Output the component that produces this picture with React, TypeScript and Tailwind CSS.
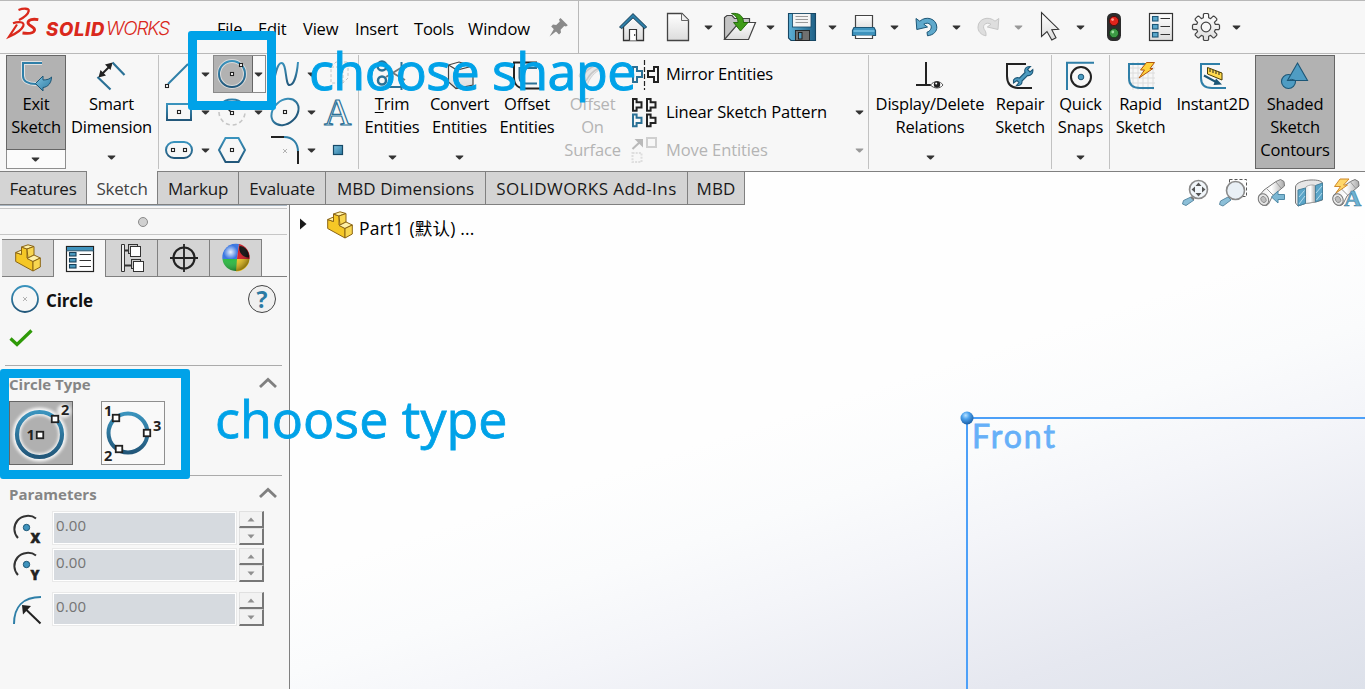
import React from "react";

type Box = [number, number, number, number];

function Ic({ b, children, cls = "" }: { b: Box; children?: React.ReactNode; cls?: string }) {
  return (
    <svg className={"block shrink-0 overflow-visible " + cls} width={b[2]} height={b[3]} viewBox={b.join(" ")} fill="none">
      {children}
    </svg>
  );
}

function Defs() {
  return (
    <svg width="0" height="0" className="absolute">
      <defs>
        <linearGradient id="blue" x1="0" y1="0" x2="0" y2="1">
          <stop offset="0" stopColor="#3a93bd" />
          <stop offset="1" stopColor="#22577a" />
        </linearGradient>
        <linearGradient id="blueFill" x1="0" y1="0" x2="1" y2="1">
          <stop offset="0" stopColor="#7cc0de" />
          <stop offset="1" stopColor="#2d7ba3" />
        </linearGradient>
        <linearGradient id="paper" x1="0" y1="0" x2="0" y2="1">
          <stop offset="0" stopColor="#ffffff" />
          <stop offset="1" stopColor="#dcdcdc" />
        </linearGradient>
        <linearGradient id="grey" x1="0" y1="0" x2="1" y2="0">
          <stop offset="0" stopColor="#e9e9e9" />
          <stop offset="0.5" stopColor="#ffffff" />
          <stop offset="1" stopColor="#a9a9a9" />
        </linearGradient>
        <linearGradient id="disk" x1="0" y1="0" x2="1" y2="0">
          <stop offset="0" stopColor="#5db0d6" />
          <stop offset="1" stopColor="#1f6187" />
        </linearGradient>
        <radialGradient id="ball" cx="0.4" cy="0.3" r="0.7">
          <stop offset="0" stopColor="#b9e2ff" />
          <stop offset="0.4" stopColor="#4da3ee" />
          <stop offset="1" stopColor="#1c5fa5" />
        </radialGradient>
        <radialGradient id="shine" cx="0.3" cy="0.3" r="0.75">
          <stop offset="0" stopColor="#fff" stopOpacity="0.9" />
          <stop offset="0.35" stopColor="#fff" stopOpacity="0.05" />
          <stop offset="1" stopColor="#000" stopOpacity="0.4" />
        </radialGradient>
        <filter id="glow" x="-30%" y="-30%" width="160%" height="160%">
          <feGaussianBlur stdDeviation="1.6" />
        </filter>
      </defs>
    </svg>
  );
}

function Caret({ color = "#333" }: { color?: string }) {
  return (
    <svg className="block shrink-0" width="9" height="5" viewBox="0 0 9 5">
      <path d="M0.7 0.4H8.3V1.2L5 4.6H4L0.7 1.2Z" fill={color} />
    </svg>
  );
}

function Dot({ x, y, s = 3 }: { x: number; y: number; s?: number }) {
  return <rect x={x - s / 2} y={y - s / 2} width={s} height={s} fill="#fff" stroke="#222" strokeWidth={s > 4 ? 1.8 : 1.1} />;
}

/* ---------- title bar ---------- */

function Logo() {
  return (
    <div className="flex items-start w-[217px] h-full">
      <Ic b={[0, 1, 46, 40]}>
        <g stroke="#da291c" strokeLinecap="butt" fill="none">
          <path d="M18.500 10C23 8.300 29.300 8 28.700 11C28 14.500 24 17.500 19 20" strokeWidth="2.3" />
          <path d="M13 23.300C18 21.300 25 21.500 23.300 26C21.300 31 14 34.500 9 36.700L17 24.500" strokeWidth="2.2" />
          <path d="M38.300 19.700C33 18.700 28 19.500 28 22.800C28 26 35.500 27 34.500 30.300C33.500 33.500 28 33.700 22.500 33" strokeWidth="2.900" />
        </g>
      </Ic>
      <div className="mt-[15px] flex text-[#da291c] leading-[26px] italic font-['Inter'] whitespace-nowrap">
        <span className="w-[60px] text-[18.5px] font-extrabold tracking-[0.7px]">SOLID</span>
        <span className="text-[19px] font-light tracking-[-1.2px]">WORKS</span>
      </div>
    </div>
  );
}

function gearPath(cx: number, cy: number) {
  const pts: string[] = [];
  for (let i = 0; i < 8; i++) {
    const a = (i * Math.PI) / 4 - Math.PI / 2;
    const at = (r: number, d: number) => `${(cx + r * Math.cos(a + d)).toFixed(2)} ${(cy + r * Math.sin(a + d)).toFixed(2)}`;
    pts.push(at(9.6, -0.28), at(13, -0.2), at(13.6, -0.12), at(13.6, 0.12), at(13, 0.2), at(9.6, 0.28));
  }
  return "M" + pts.join("L") + "Z";
}

function QuickItem({ children, b, arrow }: { children: React.ReactNode; b: Box; arrow?: string }) {
  return (
    <div className="flex items-center">
      <Ic b={b}>{children}</Ic>
      {arrow && (
        <div className="flex w-[26px] justify-center pr-[2px]">
          <Caret color={arrow} />
        </div>
      )}
    </div>
  );
}

function QuickBar() {
  return (
    <div className="flex items-center h-full border-l border-[#b9b9b9] pl-[36px]">
      <QuickItem b={[615, 9, 36, 36]}>
        <path d="M623.5 26V40.5H643.5V26L633.5 16Z" fill="url(#paper)" stroke="#333" strokeWidth="1.3" />
        <path d="M629.5 40.5V29.5H636.5V40.5" fill="#fff" stroke="#333" strokeWidth="1.2" />
        <path d="M634.7 34v2" stroke="#333" />
        <path d="M619.5 27L633 13.6L646.7 27L644.4 28.6L633 17.8L621.8 28.6Z" fill="#2e7fa8" stroke="#173f58" strokeWidth="1" />
      </QuickItem>
      <div className="w-[9px]" />
      <QuickItem b={[660, 9, 36, 36]} arrow="#333">
        <path d="M667.5 13.5H682L688.5 20V40.5H667.5Z" fill="url(#paper)" stroke="#444" strokeWidth="1.3" />
        <path d="M681.5 13.5V20.5H688.5" fill="#eee" stroke="#666" strokeWidth="1" />
      </QuickItem>
      <QuickItem b={[722, 9, 36, 36]} arrow="#333">
        <path d="M724.5 39.5V17.5L727 15.5H732L734.5 18.5H749.5V24" fill="#c4c4c4" stroke="#444" strokeWidth="1.2" />
        <path d="M724.5 39.5L736 26L740 26L744 22.5H755.5L748.5 39.5Z" fill="url(#paper)" stroke="#444" strokeWidth="1.2" />
        <path d="M731.5 13.5C739 12.5 743.5 16 743.5 22.5H748L740.5 31L733.5 22.5H738C738 18.5 736 15.5 731.5 13.5Z" fill="#3f9c18" stroke="#1f6407" strokeWidth="0.9" />
      </QuickItem>
      <QuickItem b={[784, 9, 36, 36]} arrow="#333">
        <path d="M788.5 13.5H815.5V40.5H791L788.5 38Z" fill="url(#disk)" stroke="#174764" strokeWidth="1.1" />
        <rect x="792.5" y="13.5" width="18.5" height="13.5" fill="#f4f4f4" stroke="#174764" strokeWidth="0.8" />
        <path d="M795.5 16.5H808M795.5 19.5H808M795.5 22.5H808" stroke="#999" />
        <rect x="795.5" y="30.5" width="14" height="10" fill="#707070" stroke="#222" strokeWidth="0.9" />
        <rect x="798.5" y="32.5" width="3.5" height="6.5" fill="#4d9bc2" stroke="#1a1a1a" strokeWidth="0.9" />
      </QuickItem>
      <QuickItem b={[846, 9, 36, 36]} arrow="#333">
        <path d="M855.5 30V15.5H872.5V30Z" fill="url(#paper)" stroke="#444" strokeWidth="1.2" />
        <path d="M854 27.5L852.5 30.5V35.5H875.5V30.5L874 27.5Z" fill="#3f93bd" stroke="#1c5676" strokeWidth="1.2" />
        <path d="M853.5 31H874.5" stroke="#8cd0ee" strokeWidth="1.2" />
        <path d="M855.5 35.5V38.5H872.5V35.5" fill="#fff" stroke="#444" strokeWidth="1.2" />
      </QuickItem>
      <QuickItem b={[908, 9, 36, 36]} arrow="#333">
        <path d="M916 18.5L916.8 29.5L927.5 27L923.8 24.2C929 21.2 933 25.8 930.5 29.5C929.6 31 928.5 31.8 927 32.2L927.5 35.8C934 35 937 31 936.8 27C936.5 18.5 926 15.5 919.8 21.2Z" fill="#5fa9cc" stroke="#1c5676" strokeWidth="1" />
      </QuickItem>
      <QuickItem b={[970, 9, 36, 36]} arrow="#999">
        <path d="M998.8 18.5L998 29.5L987.3 27L991 24.2C985.8 21.2 981.8 25.8 984.3 29.5C985.2 31 986.3 31.8 986 35.8C980.8 35 977.8 31 978 27C978.3 18.5 988.8 15.5 995 21.2Z" fill="#dedede" stroke="#c6c6c6" strokeWidth="1" />
      </QuickItem>
      <QuickItem b={[1032, 9, 36, 36]} arrow="#333">
        <path d="M1041.5 12.5V36.5L1047 31.5L1051.8 40L1056 37.8L1051.8 29.7L1058.6 29.2Z" fill="url(#paper)" stroke="#333" strokeWidth="1.1" />
      </QuickItem>
      <div className="w-[2px]" />
      <QuickItem b={[1096, 9, 36, 36]}>
        <rect x="1107" y="13" width="14" height="28" rx="5.5" fill="#2c2c2c" />
        <circle cx="1114" cy="21" r="4.6" fill="#e0241b" stroke="#5b0d0a" />
        <circle cx="1112.6" cy="19.6" r="1.4" fill="#ff9a8f" />
        <circle cx="1114" cy="33.2" r="4.6" fill="#3d9a45" stroke="#123c16" />
        <circle cx="1112.8" cy="32" r="1.4" fill="#9fe0a0" />
      </QuickItem>
      <div className="w-[11px]" />
      <QuickItem b={[1143, 9, 36, 36]}>
        <rect x="1149.5" y="13.5" width="23" height="27" fill="url(#paper)" stroke="#333" strokeWidth="1.2" />
        {[16.5, 24.5, 32.5].map((y) => (
          <g key={y}>
            <rect x="1152.5" y={y} width="5.5" height="4.5" fill="#5aa7cb" stroke="#1c5676" strokeWidth="1.1" />
            <path d={`M1160.5 ${y + 2}H1170`} stroke="#333" />
          </g>
        ))}
      </QuickItem>
      <div className="w-[9px]" />
      <QuickItem b={[1188, 9, 36, 36]} arrow="#333">
        <path d={gearPath(1206, 27)} fill="url(#paper)" stroke="#444" strokeWidth="1.2" strokeLinejoin="round" />
        <circle cx="1206" cy="27" r="4.8" fill="#f7f7f7" stroke="#444" strokeWidth="1.2" />
      </QuickItem>
    </div>
  );
}

function TitleBar() {
  return (
    <header className="flex h-[54px] border-t border-b border-[#b9b9b9] items-stretch shrink-0">
      <Logo />
      <nav className="flex items-center pt-[4px] whitespace-nowrap text-[16.5px] tracking-[-0.2px] text-black">
        <span className="w-[41px]">File</span>
        <span className="w-[45px]">Edit</span>
        <span className="w-[52px]">View</span>
        <span className="w-[59px]">Insert</span>
        <span className="w-[54px]">Tools</span>
        <span className="w-[76px] tracking-[-0.05px]">Window</span>
      </nav>
      <Ic b={[544, 1, 34, 52]}>
        <g fill="#8a8a8a">
          <path d="M560.5 18L567.8 25.2L566 26.6L564.2 26L560.6 29.8L561 32.6L559 34.4L551.2 26.4L553 24.6L556.2 25L559.8 21.4L559 19.4Z" />
          <path d="M554.2 28.6L556.6 31L549.5 36.6Z" />
        </g>
      </Ic>
      <QuickBar />
    </header>
  );
}

/* ---------- ribbon ---------- */

function Tool({ w, icon, lines, arrow, dim }: { w: string; icon: React.ReactNode; lines: React.ReactNode[]; arrow?: boolean; dim?: boolean }) {
  return (
    <div className={"flex h-[114px] flex-col items-center shrink-0 " + w}>
      <div className="h-[37px] pt-[5px]">{icon}</div>
      <div className={"flex flex-col items-center whitespace-nowrap leading-[23px] " + (dim ? "text-[#b4b4b4]" : "text-black")}>
        {lines.map((l, i) => (
          <span key={i}>{l}</span>
        ))}
      </div>
      {arrow && (
        <div className="mt-auto mb-[9px]">
          <Caret />
        </div>
      )}
    </div>
  );
}

const Sep = () => <div className="w-px h-[114px] bg-[#c2c2c2] shrink-0" />;

function CaretCell({ w, color }: { w: string; color?: string }) {
  return (
    <div className={"flex h-[38px] items-center justify-center shrink-0 " + w}>
      <Caret color={color} />
    </div>
  );
}

function SketchTools() {
  return (
    <div className="w-[199px] shrink-0 pl-[1px]">
      <div className="flex h-[38px]">
        <Ic b={[160, 55, 38, 38]}>
          <path d="M168 84L188 64" stroke="#2f7fa8" strokeWidth="2" />
          <Dot x={167} y={86} />
        </Ic>
        <CaretCell w="w-[15px]" />
        <div className="flex h-[38px] w-[53px] border border-[#8a8a8a] bg-[#f9f9f9]">
          <div className="w-[39px] bg-[#b2b2b2] border-r border-[#666]">
            <Ic b={[214, 56, 36, 36]}>
              <circle cx="232" cy="74" r="13" stroke="#dcdcdc" strokeWidth="4" />
              <circle cx="232" cy="74" r="13" stroke="url(#blue)" strokeWidth="2" />
              <Dot x={232} y={74} />
              <Dot x={241} y={65} />
            </Ic>
          </div>
          <div className="flex flex-1 items-center justify-center pr-px">
            <Caret />
          </div>
        </div>
        <Ic b={[266, 55, 38, 38]}>
          <path d="M273 86C275 75 277 63 281.5 63C287 63 285 85 289.5 85C294 85 297 74 298 62" stroke="url(#blue)" strokeWidth="2" />
        </Ic>
        <CaretCell w="w-[14px]" />
        <Ic b={[318, 55, 38, 38]}>
          <path d="M331 67L336 62H348V78L343 83H331ZM331 67H343V83M343 67L348 62" stroke="#c4c4c4" strokeDasharray="3 2" />
        </Ic>
      </div>
      <div className="flex h-[38px]">
        <Ic b={[160, 93, 38, 38]}>
          <rect x="167" y="104" width="24" height="16" stroke="url(#blue)" strokeWidth="2" />
          <Dot x={179} y={112} />
        </Ic>
        <CaretCell w="w-[15px]" />
        <Ic b={[213, 93, 38, 38]}>
          <path d="M222 104C225 98 239 98 242 104" stroke="#2f7fa8" strokeWidth="2" />
          <path d="M219 112A13 13 0 0 0 245 112" stroke="#c6c6c6" strokeWidth="1.6" strokeDasharray="4 3" />
          <path d="M227 108L232 113" stroke="#222" strokeWidth="1.4" />
          <Dot x={232} y={113} />
        </Ic>
        <CaretCell w="w-[15px]" />
        <Ic b={[266, 93, 38, 38]}>
          <ellipse cx="285" cy="112" rx="15" ry="11.5" transform="rotate(-42 285 112)" stroke="url(#blue)" strokeWidth="2" />
          <Dot x={285} y={112} />
        </Ic>
        <CaretCell w="w-[14px]" />
        <div className="flex w-[39px] items-center justify-center font-['Liberation_Serif'] text-[38px] leading-[38px] text-[#f7f7f7] [-webkit-text-stroke:1.2px_#2a7096]">A</div>
      </div>
      <div className="flex h-[38px]">
        <Ic b={[160, 131, 38, 38]}>
          <rect x="166" y="142" width="26" height="16" rx="8" stroke="url(#blue)" strokeWidth="2" />
          <Dot x={173} y={150} />
          <Dot x={185} y={150} />
        </Ic>
        <CaretCell w="w-[15px]" />
        <Ic b={[213, 131, 53, 38]}>
          <path d="M219 150L225.5 138H238.5L245 150L238.5 162H225.5Z" stroke="url(#blue)" strokeWidth="2" />
          <Dot x={232} y={150} />
        </Ic>
        <Ic b={[266, 131, 38, 38]}>
          <path d="M284 137C293 137 298 143 298 152" stroke="#2f7fa8" strokeWidth="2" />
          <path d="M271 137H284M298 151V164" stroke="#222" strokeWidth="2" />
          <path d="M283 149L287 153M287 149L283 153" stroke="#aaa" strokeWidth="0.9" />
        </Ic>
        <CaretCell w="w-[14px]" />
        <Ic b={[318, 131, 38, 38]}>
          <rect x="333.5" y="145.500" width="9" height="9" fill="url(#blueFill)" stroke="#164a68" strokeWidth="1.2" />
        </Ic>
      </div>
    </div>
  );
}

function PatternGlyph({ x, y, c }: { x: number; y: number; c: string }) {
  return <path transform={`translate(${x} ${y})`} d="M0 0H3.6V3.3H8.5V8.5H3.6V11.8H0Z" stroke={c} strokeWidth="2" />;
}

function EntityList() {
  const row = "flex h-[38px] items-center whitespace-nowrap";
  return (
    <div className="w-[241px] shrink-0 text-black">
      <div className={row}>
        <Ic b={[627, 55, 39, 38]}>
          <path d="M633 67H637V71H642V77H637V82H633Z" stroke="#2b7196" strokeWidth="2" />
          <path d="M658 67H654V71H648V77H654V82H658Z" stroke="#222" strokeWidth="2" />
          <path d="M644.5 60V90" stroke="#222" strokeWidth="1.2" strokeDasharray="5 2" />
        </Ic>
        <span>Mirror Entities</span>
      </div>
      <div className={row}>
        <Ic b={[627, 93, 39, 38]}>
          <PatternGlyph x={633} y={99} c="#222" />
          <PatternGlyph x={647} y={99} c="#222" />
          <PatternGlyph x={633} y={114.500} c="#2b7196" />
          <PatternGlyph x={647} y={114.500} c="#222" />
        </Ic>
        <span className="flex-1 tracking-[-0.17px]">Linear Sketch Pattern</span>
        <CaretCell w="w-[18px]" />
      </div>
      <div className={row + " text-[#b4b4b4]"}>
        <Ic b={[627, 131, 39, 38]}>
          <path d="M632.5 149L641 141" stroke="#b9b9b9" strokeWidth="2" />
          <path d="M634.5 139H643V147.5Z" fill="#b9b9b9" />
          <rect x="647" y="138" width="9" height="9" stroke="#cfcfcf" strokeWidth="2" />
          <rect x="632.5" y="153" width="9" height="9" stroke="#dedede" strokeWidth="2" strokeDasharray="2 1.2" />
        </Ic>
        <span className="flex-1 tracking-[-0.1px]">Move Entities</span>
        <CaretCell w="w-[18px]" color="#999" />
      </div>
    </div>
  );
}

function Ribbon() {
  return (
    <section className="flex h-[117px] shrink-0 pt-px pl-[6px] text-[16.5px] tracking-[-0.2px]">
      <div className="flex w-[60px] shrink-0 flex-col h-[114px]">
        <div className="h-[95px] border border-[#666] bg-[#b2b2b2]">
          <div className="flex flex-col items-center leading-[23px]">
            <Ic b={[16, 56, 40, 36]}>
              <path d="M42 63H23V76C23 81 28 84 36 84" stroke="#e2e2e2" strokeWidth="4" />
              <path d="M42 63H23V76C23 81 28 84 36 84" stroke="#2f7fa8" strokeWidth="2" />
              <path d="M35.5 83.5L43 76V80C47 80 50 79 51.5 77C51.5 83 48 87 43 87.5V91Z" fill="url(#blueFill)" stroke="#1c5676" strokeWidth="1" />
            </Ic>
            <span>Exit</span>
            <span>Sketch</span>
          </div>
        </div>
        <div className="flex h-[19px] items-center justify-center border border-t-0 border-[#8f8f8f] bg-[#fbfbfb] pr-px">
          <Caret />
        </div>
      </div>
      <Tool
        w="w-[91px]"
        arrow
        lines={["Smart", "Dimension"]}
        icon={
          <Ic b={[95, 60, 34, 32]}>
            <path d="M112.5 62.5L124.5 75M97.5 77L110.5 89.5" stroke="#2b7196" strokeWidth="2.2" />
            <path d="M101 75L111 65" stroke="#222" strokeWidth="2" />
            <path d="M98.5 77.5L106 75.5L100.5 70ZM112.5 62.5L105 64.5L110.5 70Z" fill="#222" />
          </Ic>
        }
      />
      <div className="w-px" />
      <Sep />
      <SketchTools />
      <Sep />
      <Tool
        w="w-[68px] -ml-px"
        arrow
        lines={[<span key="t"><span className="underline underline-offset-2">T</span>rim</span>, "Entities"]}
        icon={
          <Ic b={[374, 60, 36, 32]}>
            <circle cx="382" cy="66" r="4.5" stroke="#2b7196" strokeWidth="2.5" />
            <circle cx="382" cy="80.5" r="4" stroke="#2b7196" strokeWidth="2.5" />
            <path d="M386 69L405 80M386 77L404 66" stroke="#777" strokeWidth="2" />
            <path d="M401.5 62V90M386 87H406" stroke="#2b7196" strokeWidth="2" />
          </Ic>
        }
      />
      <Tool
        w="w-[67px]"
        arrow
        lines={["Convert", "Entities"]}
        icon={
          <Ic b={[443, 60, 34, 32]}>
            <path d="M448.500 65L459 62L473 66V85L456 88.500L448.500 82Z" fill="url(#paper)" stroke="#444" strokeWidth="1.2" />
            <path d="M448.500 65L457 70L473 66M457 70V88" stroke="#444" strokeWidth="1.2" />
          </Ic>
        }
      />
      <Tool
        w="w-[68px]"
        lines={["Offset", "Entities"]}
        icon={
          <Ic b={[510, 60, 34, 32]}>
            <path d="M537 62.500H514V78C514 85 519 88.500 526 88.500H541" stroke="#222" strokeWidth="2" />
            <path d="M537 68H519.500V78C519.500 81 522 83.500 526 83.500H537" stroke="#2b7196" strokeWidth="2" />
          </Ic>
        }
      />
      <Tool
        w="w-[63px]"
        dim
        lines={["Offset", "On", "Surface"]}
        icon={
          <Ic b={[577, 60, 34, 32]}>
            <path d="M580 76C583 68 588 63 596 63L602 69C596 72 590 78 588 86Z" fill="#e6e6e6" stroke="#d0d0d0" />
            <path d="M583 78C586 71 592 67 598 65M587 81C590 75 594 71 600 68" stroke="#c6c6c6" strokeWidth="1.4" />
          </Ic>
        }
      />
      <div className="w-[3px]" />
      <EntityList />
      <Sep />
      <Tool
        w="w-[122px]"
        arrow
        lines={["Display/Delete", "Relations"]}
        icon={
          <Ic b={[911, 60, 38, 32]}>
            <path d="M926 62V85M916 85H933" stroke="#222" strokeWidth="2" />
            <path d="M930.500 85C934 80.500 940 80.500 943 85C940 89 934 89 930.500 85Z" fill="#fff" stroke="#555" strokeWidth="1" />
            <circle cx="937" cy="84.500" r="3.200" fill="#222" />
            <circle cx="936.200" cy="83.500" r="1" fill="#fff" />
          </Ic>
        }
      />
      <Tool
        w="w-[60px] -ml-px mr-px"
        lines={["Repair", "Sketch"]}
        icon={
          <Ic b={[1004, 60, 34, 32]}>
            <path d="M1027 64H1008V76C1008 84 1012 88 1020 88H1033" stroke="#222" strokeWidth="2" />
            <path d="M1014.500 80C1016 77.500 1019 77.500 1020.500 78L1026 72.500C1025 69 1027 66 1031.500 66.500L1028.500 69.500L1031 72L1033.800 69.500C1034.500 73.500 1031.500 76 1028.500 75.500L1023 81C1023.500 84 1021 86 1017.500 85.500L1020 82.500L1018 80.500L1014.500 83Z" fill="#4c9bc0" stroke="#1c5676" strokeWidth="1.1" />
          </Ic>
        }
      />
      <Sep />
      <Tool
        w="w-[57px]"
        arrow
        lines={["Quick", "Snaps"]}
        icon={
          <Ic b={[1064, 60, 34, 32]}>
            <path d="M1067 90V62.800H1094" stroke="#2f7fa8" strokeWidth="2" />
            <circle cx="1081" cy="77" r="10" stroke="#222" strokeWidth="2" />
            <circle cx="1081" cy="77" r="2.800" fill="#4c9bc0" stroke="#1c5676" />
          </Ic>
        }
      />
      <Sep />
      <Tool
        w="w-[63px] -ml-px"
        lines={["Rapid", "Sketch"]}
        icon={
          <Ic b={[1124, 60, 34, 32]}>
            <path d="M1133 62V90M1138 62V90M1143 62V90M1148 62V90M1153 62V90M1128 68H1155M1128 73H1155M1128 78H1155M1128 83H1155" stroke="#dcdcdc" />
            <path d="M1146 64H1129V78C1129 84.500 1132 88 1140 88H1154" stroke="#2f7fa8" strokeWidth="2" />
            <path d="M1146.500 62.500H1154.500L1150 68.500H1153L1139 78L1144.500 70H1140.500Z" fill="#ffd23c" stroke="#b3560c" strokeWidth="1" />
          </Ic>
        }
      />
      <Tool
        w="w-[82px]"
        lines={["Instant2D"]}
        icon={
          <Ic b={[1196, 60, 34, 32]}>
            <path d="M1220 64H1201V78C1201 84.500 1204 88 1212 88H1226" stroke="#2f7fa8" strokeWidth="2" />
            <path d="M1207.500 67.500L1222 73V80L1207.500 74Z" fill="#ffd94d" stroke="#4a3b00" strokeWidth="1" />
            <path d="M1210 69V72M1213 70V73M1216 71V74M1219 72V75" stroke="#222" />
            <path d="M1204 75.500L1216 82" stroke="#1c5676" strokeWidth="2" />
            <path d="M1216 78.500L1222 84.500L1213.500 85Z" fill="#1c5676" />
          </Ic>
        }
      />
      <div className="w-px" />
      <div className="h-[114px] w-[80px] shrink-0 border border-[#666] bg-[#b2b2b2] flex flex-col items-center leading-[23px] whitespace-nowrap">
        <Ic b={[1277, 56, 36, 36]}>
          <circle cx="1288.500" cy="81.500" r="7" fill="#4f9cc3" stroke="#1c5676" strokeWidth="1.1" />
          <path d="M1297.500 63L1307.500 80.500H1287.500Z" fill="#4f9cc3" stroke="#1c5676" strokeWidth="1.1" />
          <path d="M1288 80.500A7 7 0 0 1 1295.500 80.500" stroke="#1c5676" />
        </Ic>
        <span>Shaded</span>
        <span>Sketch</span>
        <span>Contours</span>
      </div>
    </section>
  );
}

/* ---------- command tabs and view toolbar ---------- */

function Tab({ w, active, children }: { w: string; active?: boolean; children: React.ReactNode }) {
  return (
    <div
      className={
        "flex h-[34px] shrink-0 items-center justify-center border-r border-b border-[#808080] whitespace-nowrap " +
        (active ? "bg-[#f7f7f7] text-[#444] pt-[2px] " : "bg-[#d4d4d4] text-[#1a1a1a] border-t pt-px ") +
        w
      }
    >
      {children}
    </div>
  );
}

function Binocular({ x }: { x: number }) {
  return (
    <g transform={`translate(${x} 0)`}>
      <path d="M1 196L6 190L18 181.500L22.500 179.500L26 181.500L26.500 186L14.500 196L10.500 204C7 208 -1 204 1 196Z" fill="url(#grey)" stroke="#777" strokeWidth="1" />
      <ellipse cx="5.500" cy="199.500" rx="5" ry="6" transform="rotate(-30 5.500 199.500)" fill="#e6e6e6" stroke="#777" />
      <ellipse cx="5.500" cy="199.500" rx="2.500" ry="3.200" transform="rotate(-30 5.500 199.500)" fill="#bdbdbd" stroke="#888" strokeWidth="0.8" />
      <path d="M9 189L15 195M18 182L23 188" stroke="#999" />
    </g>
  );
}

function ViewBar() {
  return (
    <div className="ml-auto flex pt-[4px]">
      <Ic b={[1178, 176, 36, 34]}>
        <path d="M1191 197L1194 200L1186 205.500L1182.500 204L1183.500 200.500Z" fill="#8cbfd8" stroke="#5b8aa3" />
        <path d="M1191 197L1194 199.500" stroke="#777" strokeWidth="2" />
        <circle cx="1198.500" cy="189.500" r="9" fill="#f1f6fa" stroke="#8a8a8a" strokeWidth="1.6" />
        <path d="M1198.500 182.500L1201.500 186H1195.500ZM1198.500 196.500L1201.500 193H1195.500ZM1191.500 189.500L1195 186.500V192.500ZM1205.500 189.500L1202 186.500V192.500Z" fill="#555" />
      </Ic>
      <Ic b={[1214, 176, 38, 34]}>
        <rect x="1229.500" y="179.500" width="17" height="17" stroke="#555" strokeDasharray="3 2" />
        <path d="M1228 197L1231 200L1223 206L1219.500 204.500L1220.500 201Z" fill="#8cbfd8" stroke="#5b8aa3" />
        <circle cx="1235.500" cy="190.500" r="9" fill="#e9f0f6" stroke="#8a8a8a" strokeWidth="1.6" />
      </Ic>
      <Ic b={[1252, 176, 38, 34]}>
        <Binocular x={1258} />
        <path d="M1271.500 197L1278 191V194.500H1284.500V199.500H1278V203Z" fill="#7cb7d3" stroke="#4e89a6" />
      </Ic>
      <Ic b={[1290, 176, 38, 34]}>
        <path d="M1295.500 187C1296 179 1321 178 1322.500 183V200L1315.500 202L1305 203.500L1298 206L1295.500 203Z" fill="#e6e6e6" stroke="#777" />
        <path d="M1305.500 188C1306 185 1314 184 1315.500 186V202L1305.500 203.500Z" fill="url(#grey)" stroke="#999" strokeWidth="0.8" />
        <path d="M1298 190L1305.500 188V203.500L1298 206Z" fill="#5aa5c8" stroke="#48809b" />
        <path d="M1315.500 185.500L1322.500 183V199.500L1315.500 202Z" fill="#5aa5c8" stroke="#48809b" />
        <path d="M1299 197L1304.500 190.500M1299 204L1305 196M1316 193L1322 186M1316.500 200L1322 193" stroke="#b5dbec" />
      </Ic>
      <div className="relative">
        <Ic b={[1328, 176, 37, 34]}>
          <Binocular x={1332.500} />
          <path d="M1340 179H1349L1343.500 185H1347.500L1336 193L1340.500 186.500H1334.500Z" fill="#ffd769" stroke="#d08a2c" />
        </Ic>
        <span className="absolute left-[16px] top-[10px] font-['Liberation_Serif'] font-bold text-[24px] leading-[24px] text-[#6db2d2] [-webkit-text-stroke:0.6px_#3f7d9c]">A</span>
      </div>
    </div>
  );
}

function TabRow() {
  return (
    <div className="flex h-[34px] shrink-0 text-[17px] tracking-[-0.2px] w-full">
      <Tab w="w-[87px]">Features</Tab>
      <Tab w="w-[71px]" active>Sketch</Tab>
      <Tab w="w-[81px]">Markup</Tab>
      <Tab w="w-[87px]">Evaluate</Tab>
      <Tab w="w-[160px] tracking-[0.04px]">MBD Dimensions</Tab>
      <Tab w="w-[202px] tracking-[0.45px]">SOLIDWORKS Add-Ins</Tab>
      <Tab w="w-[57px] tracking-[0.2px]">MBD</Tab>
      <div className="flex flex-1 border-t border-[#808080] h-[34px]">
        <ViewBar />
      </div>
    </div>
  );
}

/* ---------- property panel ---------- */

function PartIcon() {
  return (
    <svg className="block shrink-0" width="26" height="28" viewBox="0 0 26 28" fill="none">
      <g stroke="#8a6414" strokeWidth="1" strokeLinejoin="round">
        <path d="M0.700 8.500L6.500 10.500V3L12 5V14L18 17.500V27L0.700 17.500Z" fill="#f5c726" />
        <path d="M6.500 3L13 0.800L19 2.500L12 5Z" fill="#fff1a8" />
        <path d="M12 5L19 2.500V11L13 14Z" fill="#f8d650" />
        <path d="M0.700 8.500L6.500 6V10.500Z" fill="#fff1a8" />
        <path d="M12 14.500L19 11L25.300 14L18 17.500Z" fill="#fff1a8" />
        <path d="M18 17.500L25.300 14V23L18 27Z" fill="#f8d650" />
      </g>
    </svg>
  );
}

function PanelTab({ active, children }: { active?: boolean; children: React.ReactNode }) {
  return (
    <div
      className={
        "flex h-[38px] w-[52px] items-center justify-center border-t border-r border-[#808080] " +
        (active ? "bg-[#f7f7f7]" : "bg-[#d4d4d4] border-b")
      }
    >
      {children}
    </div>
  );
}

function PanelTabs() {
  return (
    <div className="mt-[4px] flex items-end pl-[2px]">
      <PanelTab><PartIcon /></PanelTab>
      <PanelTab active>
        <Ic b={[65, 244, 30, 28]}>
          <rect x="66.500" y="245.500" width="27" height="25" fill="#fff" stroke="#222" strokeWidth="1.200" />
          <rect x="67" y="246" width="26" height="3.500" fill="#3f93bd" />
          <path d="M66 249.800H94" stroke="#1c4a66" />
          {[252, 258, 264].map((y) => (
            <g key={y}>
              <rect x="69.500" y={y - 0.500} width="6.500" height="3.500" fill="#4c9bc0" stroke="#173f58" strokeWidth="1.100" />
              <path d={`M79.500 ${y + 1.500}H91`} stroke="#333" />
            </g>
          ))}
        </Ic>
      </PanelTab>
      <PanelTab>
        <Ic b={[116, 242, 32, 32]}>
          <path d="M121.500 244.500H124.500V271.500H121.500Z" fill="#eee" stroke="#333" />
          <path d="M125 250.500H130M125 265.500H133" stroke="#333" strokeWidth="2" />
          <rect x="128.500" y="244.500" width="9" height="9" fill="#ccc" stroke="#333" />
          <rect x="130.500" y="246.500" width="10" height="10" fill="#fff" stroke="#333" />
          <rect x="131.500" y="259.500" width="9" height="9" fill="#ccc" stroke="#333" />
          <rect x="133.500" y="261.500" width="10" height="10" fill="#fff" stroke="#333" />
        </Ic>
      </PanelTab>
      <PanelTab>
        <Ic b={[168, 242, 32, 32]}>
          <circle cx="184" cy="258" r="10.500" stroke="#222" strokeWidth="2.200" />
          <path d="M170 258H198M184 244V272" stroke="#222" strokeWidth="1.800" />
        </Ic>
      </PanelTab>
      <PanelTab>
        <Ic b={[220, 242, 32, 32]}>
          <path d="M237 259L239 244A13.500 13.500 0 0 0 222.500 259Z" fill="#2f6fe0" />
          <path d="M237 259L239 244A13.500 13.500 0 0 1 249.500 259Z" fill="#d3121c" />
          <path d="M222.500 259H237V271A13.500 13.500 0 0 1 222.500 259Z" fill="#22b83a" />
          <path d="M237 259H249.500A13.500 13.500 0 0 1 236 271.500Z" fill="#f0c619" />
          <path d="M239.500 246C245 246 249 251 249 257.500C243 258 238 252 239.500 246Z" fill="#000" />
          <circle cx="236" cy="257.500" r="13.500" fill="url(#shine)" />
        </Ic>
      </PanelTab>
      <div className="h-px flex-1 bg-[#808080]" />
    </div>
  );
}

function GroupTitle({ children }: { children: React.ReactNode }) {
  return (
    <div className="flex h-[24px] items-center justify-between pr-[9px] pl-[9px] text-[15px] font-bold text-[#858585]">
      <span className="tracking-[0px]">{children}</span>
      <svg className="-mt-[4px]" width="20" height="12" viewBox="0 0 20 12" fill="none">
        <path d="M2 11L10 3.500L18 11" stroke="#808080" strokeWidth="2.800" />
      </svg>
    </div>
  );
}

function TypeGlyph({ x, y, children }: { x: number; y: number; children: string }) {
  return (
    <text x={x} y={y} className="font-bold" fontFamily="Open Sans, sans-serif" fontSize="14.5" fill="#222">
      {children}
    </text>
  );
}

function CircleTypes() {
  return (
    <div className="mt-[5px] flex gap-[28px] pl-[9px]">
      <div className="h-[64px] w-[64px] border border-[#666] bg-[#b0b0b0]">
        <Ic b={[10, 402, 62, 62]}>
          <circle cx="39.500" cy="434.500" r="23" stroke="#fff" strokeWidth="8" filter="url(#glow)" opacity="0.900" />
          <circle cx="64" cy="411" r="7" fill="#fff" filter="url(#glow)" opacity="0.800" />
          <circle cx="39.500" cy="434.500" r="22.500" stroke="url(#blue)" strokeWidth="4.200" />
          <Dot x={40} y={435} s={6.500} />
          <Dot x={55} y={419} s={6.500} />
          <TypeGlyph x={26.500} y={440}>1</TypeGlyph>
          <TypeGlyph x={61} y={415}>2</TypeGlyph>
        </Ic>
      </div>
      <div className="h-[64px] w-[64px] border border-[#8f8f8f] bg-[#f9f9f9]">
        <Ic b={[102, 402, 62, 62]}>
          <circle cx="128" cy="433" r="19.500" stroke="url(#blue)" strokeWidth="4" />
          <Dot x={116} y={418} s={6.500} />
          <Dot x={147} y={433} s={6.500} />
          <Dot x={119} y={449} s={6.500} />
          <TypeGlyph x={104} y={416}>1</TypeGlyph>
          <TypeGlyph x={153} y={431}>3</TypeGlyph>
          <TypeGlyph x={104} y={461}>2</TypeGlyph>
        </Ic>
      </div>
    </div>
  );
}

function SpinButton({ up }: { up?: boolean }) {
  return (
    <div className="flex h-[17px] w-[25px] items-center justify-center border-r-2 border-b-2 border-t border-l border-t-[#e0e0e0] border-l-[#e0e0e0] border-r-[#777] border-b-[#777] bg-[#f2f2f2]">
      <svg width="8" height="5" viewBox="0 0 8 5">
        <path d={up ? "M4 0.500L7.500 4.500H0.500Z" : "M4 4.500L7.500 0.500H0.500Z"} fill="#8f8f8f" />
      </svg>
    </div>
  );
}

function ParamRow({ icon, gap }: { icon: React.ReactNode; gap: string }) {
  return (
    <div className={"flex h-[34px] items-center pl-[9px] " + gap}>
      {icon}
      <div className="h-[34px] w-[185px] border border-[#e9e9e9] bg-white p-px">
        <div className="h-full bg-[#d6dadf] pl-[2px] text-[15px] leading-[25px] tracking-[0.1px] text-[#747474]">0.00</div>
      </div>
      <div className="ml-[2px]">
        <SpinButton up />
        <SpinButton />
      </div>
    </div>
  );
}

function AxisIcon({ axis }: { axis: string }) {
  return (
    <svg className="block shrink-0 overflow-visible" width="43" height="34" viewBox="9 511 43 34" fill="none">
      <path d="M36 518.500C31 514.500 22 515 17.500 520.500C13 526 13.500 533 18 538" stroke="#333" strokeWidth="2" />
      <circle cx="26.500" cy="527.500" r="3.200" fill="#3f93bd" stroke="#1c5676" />
      <text x="30.500" y="542.500" fontFamily="Open Sans, sans-serif" fontWeight="800" fontSize="13.500" fill="#222" stroke="#222" strokeWidth="0.5">{axis}</text>
    </svg>
  );
}

function Panel() {
  return (
    <aside className="flex h-[484px] w-[290px] shrink-0 flex-col border-r border-[#808080] bg-[#f7f7f7]">
      <div className="w-[287px]">
        <div className="h-px bg-[#a9b6c2]" />
        <div className="mt-[2px] flex h-[27px] items-center justify-center border-t border-b border-[#c6c6c6] pr-[2px]">
          <div className="h-[10px] w-[10px] rounded-full border border-[#8a8a8a] bg-[#d0d0d0]" />
        </div>
        <PanelTabs />
        <div className="flex h-[44px] items-center pl-[9px] pr-[9px]">
          <Ic b={[9, 283, 37, 32]}>
            <circle cx="25" cy="299" r="13" stroke="url(#blue)" strokeWidth="1.800" />
            <path d="M23 297L27 301M27 297L23 301" stroke="#aaa" strokeWidth="0.900" />
          </Ic>
          <span className="pt-[4px] text-[17px] font-bold tracking-[-0.150px] text-[#111]">Circle</span>
          <div className="ml-auto mr-[2px] flex h-[28px] w-[28px] items-center justify-center rounded-full border border-[#444] bg-[#f0f0f0] text-[23px] font-bold leading-[26px] text-[#2b7aa3]">?</div>
        </div>
        <div className="h-px" />
        <Ic b={[0, 322, 60, 43]}>
          <path d="M10.500 338.500L17 344.500L31.500 330.500" stroke="#2f9a08" strokeWidth="3.200" />
        </Ic>
        <div className="ml-[5px] mr-[5px] h-px bg-[#ababab]" />
        <div className="h-[6px]" />
        <GroupTitle>Circle Type</GroupTitle>
        <CircleTypes />
        <div className="ml-[5px] mr-[5px] mt-[10px] h-px bg-[#ababab]" />
        <div className="h-[6px]" />
        <GroupTitle>Parameters</GroupTitle>
        <ParamRow gap="mt-[5px]" icon={<AxisIcon axis="X" />} />
        <ParamRow gap="mt-[3px]" icon={<AxisIcon axis="Y" />} />
        <ParamRow
          gap="mt-[10px]"
          icon={
            <Ic b={[9, 592, 43, 34]}>
              <path d="M14 624C14 607 23 597 41 597" stroke="#2f7fa8" strokeWidth="2" />
              <path d="M40.500 623.500L25 608.500" stroke="#222" strokeWidth="2" />
              <path d="M22 605L31 606L23 614.500Z" fill="#222" />
            </Ic>
          }
        />
      </div>
    </aside>
  );
}

/* ---------- graphics area ---------- */

function Viewport() {
  return (
    <main className="relative flex-1 overflow-hidden">
      <div className="flex items-start pl-[9px]">
        <svg className="mt-[13px] block" width="8" height="12" viewBox="0 0 8 12"><path d="M1 0.500L7.500 6L1 11.500Z" fill="#1a1a1a" /></svg>
        <div className="ml-[20px] mt-[6px]"><PartIcon /></div>
        <span className="ml-[6px] mt-[11px] whitespace-nowrap text-[17.5px] leading-[24px] tracking-[0.2px] text-black">
          Part1 <span className="ml-[1px]">(默认) ...</span>
        </span>
      </div>
      <div className="absolute left-[676px] top-[212px] h-[300px] w-[420px] border-l-2 border-t-2 border-[#4da0f8]">
        <span className="absolute left-[4px] top-[-1px] font-['Lato'] text-[32px] leading-[36px] tracking-[2px] text-[#66b0f8] [-webkit-text-stroke:0.8px_#66b0f8]">Front</span>
      </div>
      <svg className="absolute left-[670px] top-[206px]" width="14" height="14" viewBox="0 0 14 14">
        <circle cx="7" cy="7" r="6.500" fill="url(#ball)" />
      </svg>
    </main>
  );
}

export default function App() {
  return (
    <div className="relative flex h-[689px] w-[1365px] flex-col overflow-hidden bg-[#f7f7f7] font-['Open_Sans','Noto_Sans_CJK_SC',sans-serif]">
      <Defs />
      <TitleBar />
      <Ribbon />
      <div className="flex flex-1 flex-col bg-[linear-gradient(162deg,#fefefe_52%,#fafbfc_62%,#f4f5f9_71%,#e6e8f0_87%,#dde1ea_100%)]">
        <TabRow />
        <div className="flex flex-1">
          <Panel />
          <Viewport />
        </div>
      </div>
      <div className="absolute left-[188px] top-[31px] h-[79px] w-[88px] rounded-[3px] border-[9px] border-[#00a2e8]" />
      <div className="absolute left-0 top-[369px] h-[110px] w-[190px] rounded-[3px] border-[9px] border-[#00a2e8]" />
      <div className="absolute left-[309px] top-[35px] whitespace-nowrap text-[52px] leading-[70px] tracking-[-0.55px] text-[#00a2e8] [-webkit-text-stroke:1px_#00a2e8]">choose shape</div>
      <div className="absolute left-[215px] top-[383px] whitespace-nowrap text-[52px] leading-[70px] tracking-[0px] text-[#00a2e8] [-webkit-text-stroke:0.8px_#00a2e8]">choose type</div>
    </div>
  );
}
